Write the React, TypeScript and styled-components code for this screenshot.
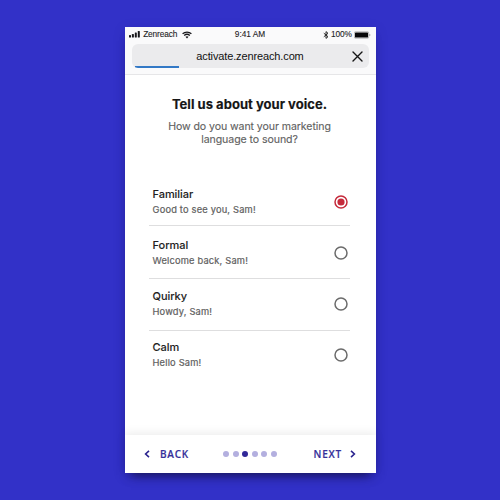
import React from "react";
import styled, { createGlobalStyle } from "styled-components";

const GlobalStyle = createGlobalStyle`
  * { box-sizing: border-box; }
  body { margin: 0; font-family: Inter, "Liberation Sans", sans-serif; }
`;

const Stage = styled.main`
  width: 500px;
  height: 500px;
  padding: 27px 0 0 125px;
  overflow: hidden;
  background: #3231c8;
`;

const Phone = styled.div`
  display: flex;
  flex-direction: column;
  width: 251px;
  height: 446px;
  background: #fff;
  box-shadow: 0 8px 10px -6px rgba(18, 15, 60, 0.8), 0 3px 12px rgba(18, 15, 90, 0.16);
`;

const Browser = styled.header`
  height: 48px;
  flex: none;
  background: #fafafb;
  border-bottom: 1px solid #e6e6e8;
  font-family: "Liberation Sans", Arial, sans-serif;
`;

const StatusBar = styled.div`
  display: grid;
  grid-template-columns: 1fr auto 1fr;
  align-items: center;
  height: 17px;
  padding: 0 5px 2px 4px;
  font-size: 8.3px;
  line-height: 15px;
  color: #1c1c1e;
`;

const StatusGroup = styled.div<{ $end?: boolean }>`
  display: flex;
  align-items: center;
  justify-content: ${(p) => (p.$end ? "flex-end" : "flex-start")};
  svg { flex: none; }
`;

const StatusText = styled.span<{ $spacing?: number }>`
  letter-spacing: ${(p) => p.$spacing ?? 0}px;
  -webkit-text-stroke: 0.1px currentColor;
`;

const AddressBar = styled.div`
  display: grid;
  grid-template-columns: 1fr auto 1fr;
  align-items: center;
  position: relative;
  width: 237px;
  height: 24px;
  margin-left: 7px;
  border-radius: 6px;
  background: #ebebed;
  overflow: hidden;
`;

const Address = styled.span`
  grid-column: 2;
  margin-right: 1px;
  font-size: 11px;
  letter-spacing: -0.13px;
  color: #111;
`;

const CloseButton = styled.button`
  display: flex;
  justify-self: end;
  margin-right: 6px;
  padding: 0;
  border: 0;
  background: none;
`;

const LoadProgress = styled.div`
  position: absolute;
  left: 3px;
  bottom: 0;
  width: 44px;
  height: 2px;
  background: #3379c6;
`;

const Content = styled.section`
  flex: 1;
  padding: 20px 26px 0 24px;
`;

const Title = styled.h1`
  margin: 0;
  font-size: 13px;
  line-height: 18px;
  font-weight: 700;
  letter-spacing: 0.03px;
  text-align: center;
  color: #161616;
  -webkit-text-stroke: 0.15px currentColor;
`;

const Prompt = styled.p`
  margin: 8px 0 0;
  font-size: 10.6px;
  line-height: 12.5px;
  letter-spacing: -0.09px;
  text-align: center;
  color: #5f5f5f;
  -webkit-text-stroke: 0.12px currentColor;
`;

const Options = styled.ul`
  margin: 34px 0 0;
  padding: 0;
  list-style: none;
`;

const Option = styled.li<{ $height: number; $top: number }>`
  display: flex;
  justify-content: space-between;
  height: ${(p) => p.$height}px;
  padding: ${(p) => p.$top}px 2.5px 0 3.5px;
  &:not(:last-child) { border-bottom: 1px solid #dededf; }
`;

const OptionName = styled.div`
  font-size: 11px;
  line-height: 15px;
  font-weight: 500;
  letter-spacing: -0.05px;
  color: #1f1f1f;
  -webkit-text-stroke: 0.1px currentColor;
`;

const OptionSample = styled.div`
  font-size: 9.3px;
  line-height: 15px;
  letter-spacing: 0.19px;
  color: #606060;
  -webkit-text-stroke: 0.2px currentColor;
`;

const RadioIcon = styled.svg<{ $selected: boolean }>`
  flex: none;
  width: 14px;
  height: 14px;
  margin-top: 7.5px;
  color: ${(p) => (p.$selected ? "#c52a3b" : "#6b6b6b")};
`;

const Footer = styled.footer`
  display: grid;
  grid-template-columns: 1fr auto 1fr;
  align-items: center;
  height: 38px;
  flex: none;
  padding: 0 20px 0 19px;
  background: #fff;
  box-shadow: 0 -2px 9px rgba(0, 0, 0, 0.08);
`;

const NavButton = styled.button<{ $end?: boolean }>`
  display: flex;
  align-items: center;
  gap: ${(p) => (p.$end ? 8 : 10)}px;
  justify-self: ${(p) => (p.$end ? "end" : "start")};
  padding: 0;
  border: 0;
  background: none;
  font: 600 10px/14px "Open Sans", Lato, sans-serif;
  letter-spacing: ${(p) => (p.$end ? 0.8 : 0.75)}px;
  color: #35309a;
  -webkit-text-stroke: 0.15px currentColor;
`;

const Dots = styled.div`
  display: flex;
  gap: 3.5px;
`;

const Dot = styled.span<{ $active: boolean }>`
  width: 6px;
  height: 6px;
  border-radius: 50%;
  background: ${(p) => (p.$active ? "#312898" : "#b3afdf")};
`;

const voices = [
  { name: "Familiar", sample: "Good to see you, Sam!", height: 46, top: 7 },
  { name: "Formal", sample: "Welcome back, Sam!", height: 53, top: 12 },
  { name: "Quirky", sample: "Howdy, Sam!", height: 52, top: 10 },
  { name: "Calm", sample: "Hello Sam!", height: 50, top: 9 },
];

const Radio = ({ selected }: { selected: boolean }) => (
  <RadioIcon viewBox="0 0 14 14" fill="none" role="radio" aria-checked={selected} $selected={selected}>
    <circle cx="7" cy="7" r="6" stroke="currentColor" strokeWidth="1.5" />
    {selected && <circle cx="7" cy="7" r="3.6" fill="currentColor" />}
  </RadioIcon>
);

const SignalIcon = () => (
  <svg width="12" height="7" viewBox="0 0 12 7" fill="#17171a">
    <rect x="0" y="4" width="2" height="2.5" rx=".6" />
    <rect x="2.9" y="3" width="2" height="3.5" rx=".6" />
    <rect x="5.8" y="1.5" width="2" height="5" rx=".6" />
    <rect x="8.8" y="0" width="2" height="6.5" rx=".6" />
  </svg>
);

const WifiIcon = () => (
  <svg width="10" height="8" viewBox="0 0 10 8" fill="none" stroke="#17171a" strokeWidth="1.3">
    <path d="M.6 2.8C3.1.5 6.9.5 9.4 2.8M2.2 4.5c1.6-1.4 4-1.4 5.6 0" />
    <path d="M3.5 5.8c.9-.7 2.1-.7 3 0L5 7.4Z" fill="#17171a" stroke="none" />
  </svg>
);

const BluetoothIcon = () => (
  <svg width="6" height="8" viewBox="0 0 6 8" fill="none" stroke="#222" strokeWidth=".95">
    <path d="M.8 2.2 5 5.7 3 7.4V.6l2 1.7L.8 5.8" />
  </svg>
);

const BatteryIcon = () => (
  <svg width="17" height="8" viewBox="0 0 17 8">
    <rect x=".3" y=".8" width="14.4" height="6.4" rx="1" fill="#fff" stroke="#777" strokeWidth=".5" />
    <rect x="1" y="1.4" width="13" height="5.2" rx=".6" fill="#09090a" />
    <path d="M15.5 3v2q.9-.3.9-1t-.9-1" fill="#777" />
  </svg>
);

const CloseIcon = () => (
  <svg width="11" height="11" viewBox="0 0 11 11" stroke="#161616" strokeWidth="1.4" strokeLinecap="round">
    <path d="m1 1 9 9M10 1 1 10" />
  </svg>
);

const Chevron = ({ right = false }: { right?: boolean }) => (
  <svg width="6" height="8" viewBox="0 0 6 8" fill="none" stroke="#2b248f" strokeWidth="1.6">
    <path d={right ? "m1 .8 3.4 3.2L1 7.2" : "M5 .8 1.6 4 5 7.2"} />
  </svg>
);

export default function App() {
  return (
    <>
      <GlobalStyle />
      <Stage>
        <Phone>
          <Browser>
            <StatusBar>
              <StatusGroup>
                <SignalIcon />
                <StatusText $spacing={-0.13}>&nbsp;Zenreach&nbsp;&nbsp;</StatusText>
                <WifiIcon />
              </StatusGroup>
              <StatusText>9:41 AM</StatusText>
              <StatusGroup $end>
                <BluetoothIcon />
                <StatusText $spacing={-0.1}>&nbsp;100%&nbsp;</StatusText>
                <BatteryIcon />
              </StatusGroup>
            </StatusBar>
            <AddressBar>
              <Address>activate.zenreach.com</Address>
              <CloseButton aria-label="Close"><CloseIcon /></CloseButton>
              <LoadProgress />
            </AddressBar>
          </Browser>
          <Content>
            <Title>Tell us about your voice.</Title>
            <Prompt>How do you want your marketing<br />language to sound?</Prompt>
            <Options>
              {voices.map((voice, i) => (
                <Option key={voice.name} $height={voice.height} $top={voice.top}>
                  <div>
                    <OptionName>{voice.name}</OptionName>
                    <OptionSample>{voice.sample}</OptionSample>
                  </div>
                  <Radio selected={i === 0} />
                </Option>
              ))}
            </Options>
          </Content>
          <Footer>
            <NavButton><Chevron />BACK</NavButton>
            <Dots>
              {[0, 1, 2, 3, 4, 5].map((step) => <Dot key={step} $active={step === 2} />)}
            </Dots>
            <NavButton $end>NEXT<Chevron right /></NavButton>
          </Footer>
        </Phone>
      </Stage>
    </>
  );
}
